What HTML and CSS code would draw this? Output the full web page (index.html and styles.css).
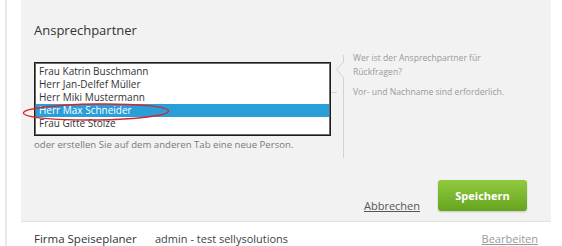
FILE: index.html
```html
<!DOCTYPE html>
<html lang="de">
<head>
  <meta charset="UTF-8">
  <title>Ansprechpartner</title>
  <link rel="stylesheet" href="styles.css">
</head>
<body>
  <div class="page">
    <div class="panel">
      <h2 class="title">Ansprechpartner</h2>

      <div class="form-row">
        <div class="field">
          <ul class="listbox">
            <li>Frau Katrin Buschmann</li>
            <li>Herr Jan-Delfef Müller</li>
            <li>Herr Miki Mustermann</li>
            <li class="selected">Herr Max Schneider</li>
            <li>Frau Gitte Stolze</li>
          </ul>
          <svg class="marker" width="150" height="20" viewBox="0 0 150 20">
            <ellipse cx="74" cy="10" rx="72.5" ry="8" fill="none" stroke="#d3262c" stroke-width="1.4" transform="rotate(-0.8 74 10)"/>
          </svg>
          <p class="helper">oder erstellen Sie auf dem anderen Tab eine neue Person.</p>
        </div>

        <svg class="divider" width="14" height="103" viewBox="0 0 14 103">
          <polyline points="12.5,0 12.5,7 5.5,14.5 12.5,22.5 12.5,103" fill="none" stroke="#d2d2d2" stroke-width="1"/>
          <line x1="0" y1="37.5" x2="6" y2="37.5" stroke="#d6d6d6" stroke-width="1"/>
        </svg>

        <div class="hint">
          <p>Wer ist der Ansprechpartner für Rückfragen?</p>
          <p>Vor- und Nachname sind erforderlich.</p>
        </div>
      </div>

      <div class="actions">
        <a href="#" class="cancel">Abbrechen</a>
        <button class="btn-save">Speichern</button>
      </div>
    </div>

    <div class="summary">
      <span class="summary-name">Firma Speiseplaner</span>
      <span class="summary-user">admin - test sellysolutions</span>
      <a href="#" class="summary-edit">Bearbeiten</a>
    </div>
  </div>
</body>
</html>
```

FILE: styles.css
```css
body {
  margin: 0;
  background: #fff;
  font-family: "Open Sans", "Liberation Sans", sans-serif;
  color: #333;
}

.page {
  margin-left: 5px;
  border-left: 2px solid #e8e8e8;
  padding-left: 14px;
  min-height: 246px;
}

.panel {
  width: 530px;
  box-sizing: border-box;
  background: #f2f2f2;
  border-bottom: 1px solid #e2e2e2;
  padding: 22px 13px 10px;
}

.title {
  margin: 0;
  font-size: 13px;
  font-weight: normal;
  line-height: 16px;
  color: #333;
}

.form-row {
  display: flex;
  align-items: flex-start;
  margin-top: 13px;
}

.field {
  position: relative;
  width: 297px;
  padding-top: 11px;
}

.listbox {
  list-style: none;
  margin: 0;
  padding: 2px 0 3px;
  height: 74px;
  box-sizing: border-box;
  background: #fff;
  border: 1px solid #1e1e1e;
  box-shadow: inset 0 0 0 1px #6a6a6a;
  font-size: 10px;
}

.listbox li {
  height: 13px;
  line-height: 13px;
  padding-left: 3px;
  margin: 0 1px;
  color: #333;
  white-space: nowrap;
}

.listbox li.selected {
  background: #2a9ed8;
  color: #fff;
}

.marker {
  position: absolute;
  left: -12px;
  top: 51px;
}

.helper {
  margin: 2px 0 0;
  font-size: 9.6px;
  line-height: 14px;
  color: #7a7a7a;
}

.divider {
  display: block;
  flex: none;
  margin-top: 4px;
}

.hint {
  padding-left: 8px;
  width: 165px;
  font-size: 8.6px;
  line-height: 14px;
  color: #9a9a9a;
}

.hint p {
  margin: 0 0 6px;
}

.actions {
  display: flex;
  justify-content: flex-end;
  align-items: flex-end;
  gap: 18px;
  margin-top: 22px;
  padding-right: 11px;
}

.cancel {
  font-size: 11px;
  line-height: 14px;
  margin-bottom: -2px;
  color: #555;
}

.btn-save {
  width: 89px;
  height: 31px;
  border: none;
  border-radius: 3px;
  background: linear-gradient(#8fca3e, #67a41f);
  box-shadow: 0 1px 2px rgba(0, 0, 0, 0.2);
  color: #fff;
  font-family: inherit;
  font-size: 11px;
  font-weight: bold;
  cursor: pointer;
}

.summary {
  display: flex;
  width: 530px;
  box-sizing: border-box;
  padding: 9px 13px 0;
  font-size: 11px;
  line-height: 16px;
}

.summary-name {
  width: 121px;
  font-size: 11.5px;
}

.summary-user {
  color: #444;
}

.summary-edit {
  margin-left: auto;
  color: #999;
}
```
